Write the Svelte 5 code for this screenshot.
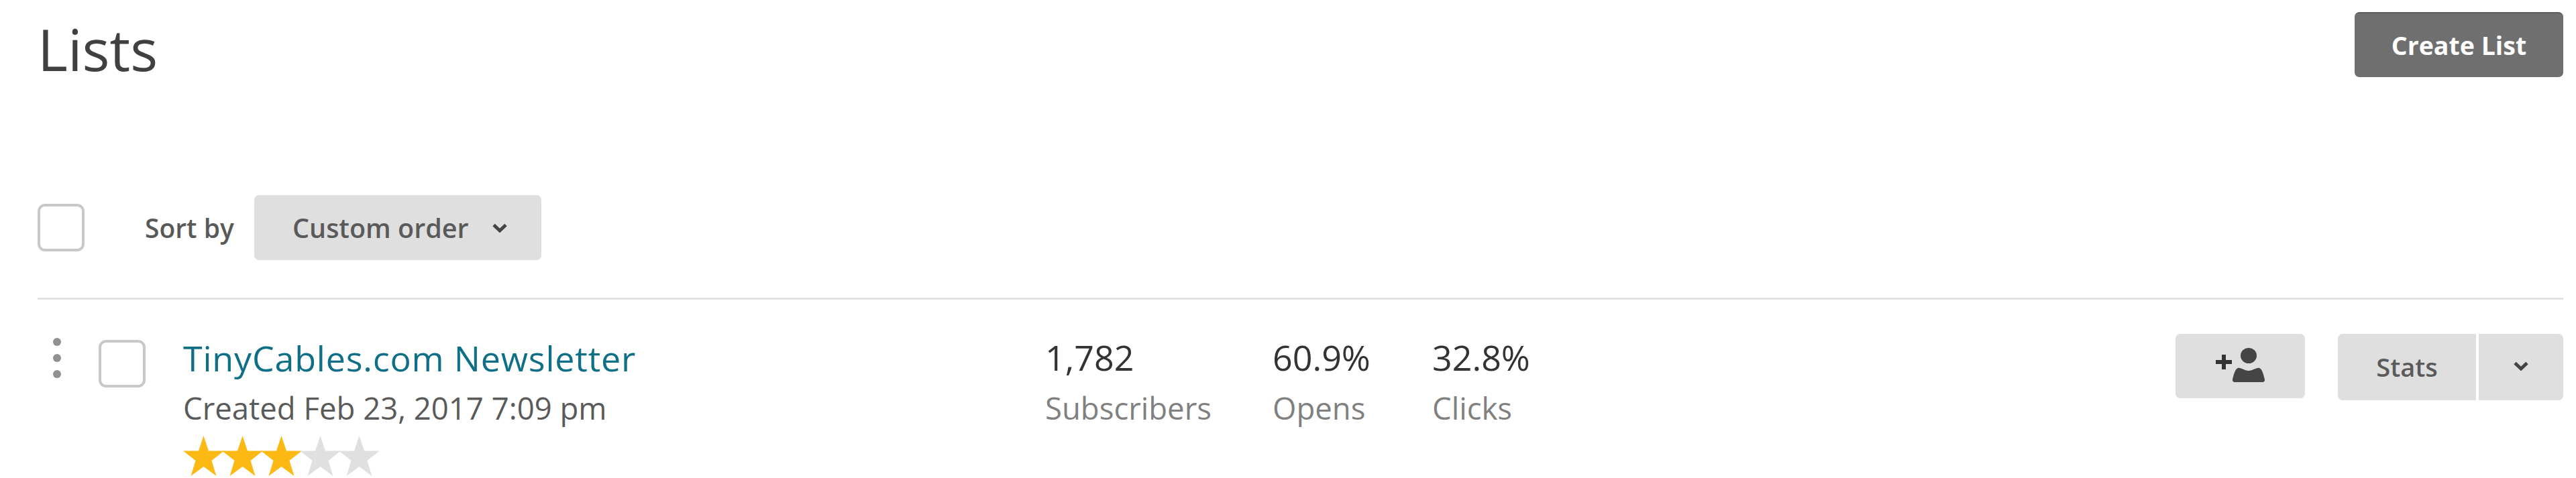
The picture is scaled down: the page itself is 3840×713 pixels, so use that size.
<script>
  const stars = [true, true, true, false, false];
  const stats = [
    { value: '1,782', label: 'Subscribers', width: 339 },
    { value: '60.9%', label: 'Opens', width: 238 },
    { value: '32.8%', label: 'Clicks', width: 200 }
  ];
</script>

<div class="page">
  <header class="head">
    <h1>Lists</h1>
    <button class="create">Create List</button>
  </header>

  <div class="toolbar">
    <span class="check"></span>
    <span class="sort-label">Sort by</span>
    <button class="btn select">
      Custom order
      <svg class="chev" viewBox="0 0 24 14"><path d="M3 2.5 12 11 21 2.5" /></svg>
    </button>
  </div>

  <div class="row">
    <div class="dots"><i></i><i></i><i></i></div>
    <span class="check item-check"></span>
    <div class="info">
      <a href="#list" class="title">TinyCables.com Newsletter</a>
      <div class="created">Created Feb 23, 2017 7:09 pm</div>
      <div class="stars">
        {#each stars as on}
          <svg class:on viewBox="0 0 61 60"><polygon points="30.5,0 38,22.5 61,22.5 42.5,37 49.5,60 30.5,46 11.5,60 18.5,37 0,22.5 23,22.5" /></svg>
        {/each}
      </div>
    </div>
    <div class="stats">
      {#each stats as s}
        <div class="stat" style="width:{s.width}px">
          <div class="value">{s.value}</div>
          <div class="label">{s.label}</div>
        </div>
      {/each}
    </div>
    <div class="actions">
      <button class="btn add" aria-label="Add subscriber">
        <svg viewBox="0 0 73 51">
          <path class="plus" d="M0 21h24M12 10v22" />
          <ellipse cx="49" cy="11.500" rx="12" ry="11.500" />
          <path d="M33 30c5-1 9 4 16 4s11-5 16-4c4 1 6 9 8 17 .5 2-1 4-3 4H28c-2 0-3.500-2-3-4 2-8 4-16 8-17z" />
        </svg>
      </button>
      <div class="split">
        <button class="btn stats-btn">Stats</button>
        <button class="btn caret" aria-label="More">
          <svg class="chev" viewBox="0 0 24 14"><path d="M3 2.5 12 11 21 2.5" /></svg>
        </button>
      </div>
    </div>
  </div>
</div>

<style>
  :global(body) {
    margin: 0;
    background: #fff;
  }
  .page {
    height: 713px;
    padding: 0 19px 0 56px;
    box-sizing: border-box;
    overflow: hidden;
    font-family: "Open Sans", sans-serif;
    color: #404040;
  }
  button {
    font-family: inherit;
    border: 0;
    padding: 0;
    cursor: pointer;
  }
  .head {
    display: flex;
    justify-content: space-between;
    align-items: flex-start;
    height: 291px;
  }
  h1 {
    margin: 0;
    padding-top: 15px;
    font-size: 86px;
    line-height: 116px;
    font-weight: 400;
    color: #404040;
  }
  .create {
    margin-top: 18px;
    width: 311px;
    height: 97px;
    border-radius: 7px;
    background: #6f6f6f;
    border-top: 2px solid #5e5e5e;
    color: #fff;
    font-size: 37.500px;
    font-weight: 700;
  }
  .toolbar {
    display: flex;
    align-items: center;
    height: 156px;
    box-sizing: border-box;
    padding-bottom: 56px;
    border-bottom: 3px solid #e2e2e2;
  }
  .check {
    display: block;
    flex: none;
    width: 70px;
    height: 71px;
    box-sizing: border-box;
    border: 4px solid #c8c8c8;
    border-radius: 11px;
    background: #fff;
  }
  .sort-label {
    margin-left: 90px;
    width: 163px;
    font-size: 39px;
    font-weight: 600;
    color: #595959;
  }
  .btn {
    background: #dfdfdf;
    color: #5a5a5a;
    border-radius: 7px;
    font-size: 38px;
    font-weight: 600;
  }
  .select {
    display: flex;
    align-items: center;
    justify-content: space-between;
    width: 428px;
    height: 97px;
    padding: 0 50px 0 57px;
    box-sizing: border-box;
    font-size: 39.500px;
  }
  .chev {
    display: block;
    width: 24px;
    height: 14px;
    fill: none;
    stroke: #444;
    stroke-width: 5;
  }
  .row {
    display: flex;
    align-items: flex-start;
  }
  .dots {
    display: flex;
    flex-direction: column;
    gap: 12px;
    width: 91px;
    padding: 57px 0 0 23px;
    box-sizing: border-box;
  }
  .dots i {
    display: block;
    width: 12px;
    height: 12px;
    border-radius: 50%;
    background: #909090;
  }
  .item-check {
    margin-top: 60px;
  }
  .info {
    margin-left: 56px;
    width: 1285px;
    padding-top: 52px;
  }
  .title {
    display: block;
    font-size: 52px;
    line-height: 70px;
    font-weight: 400;
    letter-spacing: 0.8px;
    color: #0f6f86;
    text-decoration: none;
  }
  .created {
    margin-top: 8px;
    font-size: 45.500px;
    line-height: 62px;
    color: #5a5a5a;
  }
  .stars {
    display: flex;
    margin-top: 11px;
  }
  .stars svg {
    display: block;
    flex: none;
    width: 61px;
    height: 60px;
    margin-right: -3px;
    fill: #e0e0e0;
  }
  .stars svg.on {
    fill: #fdb913;
  }
  .stats {
    display: flex;
    padding-top: 51px;
  }
  .value {
    font-size: 52px;
    line-height: 70px;
    color: #333;
  }
  .label {
    margin-top: 9px;
    font-size: 45.500px;
    line-height: 62px;
    color: #808080;
  }
  .actions {
    display: flex;
    align-items: flex-start;
    margin-left: auto;
    padding-top: 51px;
    gap: 49px;
  }
  .add {
    display: flex;
    align-items: center;
    justify-content: center;
    width: 193px;
    height: 96px;
  }
  .add svg {
    width: 73px;
    height: 51px;
    margin-top: -3px;
    fill: #454545;
  }
  .plus {
    fill: none;
    stroke: #333;
    stroke-width: 6;
  }
  .split {
    display: flex;
    gap: 4px;
  }
  .stats-btn {
    width: 206px;
    height: 99px;
    padding-bottom: 2px;
    border-radius: 7px 0 0 7px;
  }
  .caret {
    display: flex;
    align-items: center;
    justify-content: center;
    width: 126px;
    height: 99px;
    padding-bottom: 4px;
    border-radius: 0 7px 7px 0;
  }
</style>
